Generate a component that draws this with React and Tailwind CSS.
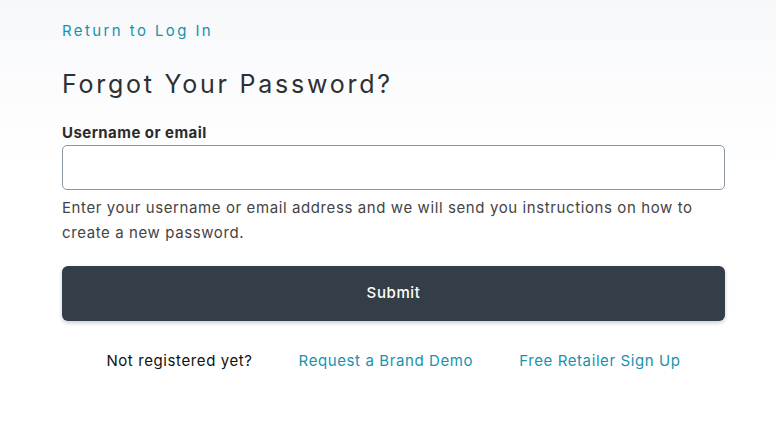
export default function App() {
  return (
    <div className="min-h-[421px] w-full bg-gradient-to-b from-[#f7f8fa] to-white to-40% font-['Inter','Open_Sans',sans-serif] text-[#333]">
      <div className="ml-[62px] mr-[51px] flex flex-col pt-[21px]">
        <a href="#" className="self-start text-[15px] leading-[20px] tracking-[0.16em] text-[#1793ad]">
          Return to Log In
        </a>
        <h1 className="mt-[28px] text-[25px] leading-[30px] tracking-[0.11em] text-[#2e3033]">
          Forgot Your Password?
        </h1>
        <label className="mt-[25px] text-[15px] font-bold leading-[18px] tracking-[0.03em] text-[#2b2b2b]">
          Username or email
        </label>
        <input
          type="text"
          className="mt-[3px] h-[45px] w-full rounded-[5px] border border-[#8c96a1] bg-white px-3"
        />
        <p className="mt-[5px] text-[15px] leading-[25px] tracking-[0.04em] text-[#444]">
          Enter your username or email address and we will send you instructions on how to create a new password.
        </p>
        <button className="mt-[21px] h-[55px] w-full rounded-[6px] bg-[#333e48] text-[15px] font-medium tracking-[0.04em] text-white shadow-[0_2px_4px_rgba(0,0,0,0.2)]">
          Submit
        </button>
        <div className="mt-[29px] flex justify-center gap-[46px] text-[15px] leading-[22px] tracking-[0.04em]">
          <span className="text-[#111]">Not registered yet?</span>
          <a href="#" className="text-[#1793ad]">Request a Brand Demo</a>
          <a href="#" className="text-[#1793ad]">Free Retailer Sign Up</a>
        </div>
      </div>
    </div>
  );
}
